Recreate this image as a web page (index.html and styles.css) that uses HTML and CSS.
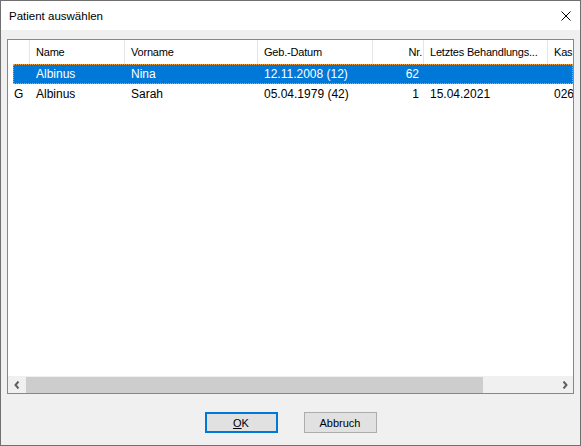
FILE: index.html
```html
<!DOCTYPE html>
<html lang="de">
<head>
<meta charset="utf-8">
<title>Patient auswählen</title>
<link rel="stylesheet" href="styles.css">
</head>
<body>
<div class="window">
  <div class="titlebar">
    <span class="title">Patient auswählen</span>
    <svg class="close" width="10" height="10" viewBox="0 0 10 10"><path d="M0.5 0.5 L9.5 9.5 M9.5 0.5 L0.5 9.5" stroke="#000" stroke-width="1" fill="none"/></svg>
  </div>
  <div class="client">
    <div class="listview">
      <div class="header">
        <div class="hcell"></div>
        <div class="hcell">Name</div>
        <div class="hcell">Vorname</div>
        <div class="hcell">Geb.-Datum</div>
        <div class="hcell right">Nr.</div>
        <div class="hcell">Letztes Behandlungs...</div>
        <div class="hcell">Kas</div>
      </div>
      <div class="rows">
        <div class="row selected">
          <div class="cell"></div>
          <div class="cell">Albinus</div>
          <div class="cell">Nina</div>
          <div class="cell">12.11.2008 (12)</div>
          <div class="cell right">62</div>
          <div class="cell"></div>
          <div class="cell"></div>
        </div>
        <div class="row">
          <div class="cell">G</div>
          <div class="cell">Albinus</div>
          <div class="cell">Sarah</div>
          <div class="cell">05.04.1979 (42)</div>
          <div class="cell right">1</div>
          <div class="cell">15.04.2021</div>
          <div class="cell">026</div>
        </div>
      </div>
      <div class="hscroll">
        <div class="sbtn"><svg width="6" height="8" viewBox="0 0 6 8"><path d="M4.5 0.5 L1.5 4 L4.5 7.5" stroke="#606060" stroke-width="2" fill="none"/></svg></div>
        <div class="track"><div class="thumb"></div></div>
        <div class="sbtn"><svg width="6" height="8" viewBox="0 0 6 8"><path d="M1.5 0.5 L4.5 4 L1.5 7.5" stroke="#606060" stroke-width="2" fill="none"/></svg></div>
      </div>
    </div>
    <div class="buttons">
      <button class="btn default"><u>O</u>K</button>
      <button class="btn">Abbruch</button>
    </div>
  </div>
</div>
</body>
</html>
```
FILE: styles.css
```css
html, body {
  margin: 0;
  padding: 0;
  background: #ffffff;
}
body {
  font-family: "Liberation Sans", Arial, sans-serif;
  color: #000;
}
.window {
  width: 581px;
  height: 446px;
  box-sizing: border-box;
  border: 1px solid #707070;
  background: #f0f0f0;
  display: flex;
  flex-direction: column;
}
.titlebar {
  height: 29px;
  flex: none;
  background: #ffffff;
  display: flex;
  align-items: center;
  justify-content: space-between;
  padding-left: 8px;
}
.title {
  font-size: 11.5px;
  color: #000;
}
.close {
  margin-right: 9px;
  display: block;
}
.client {
  flex: 1;
  display: flex;
  flex-direction: column;
  padding: 9px 6px 0 6px;
}
.listview {
  height: 355px;
  box-sizing: border-box;
  border: 1px solid #828790;
  background: #ffffff;
  display: flex;
  flex-direction: column;
  overflow: hidden;
}
.header, .row {
  display: grid;
  grid-template-columns: 22px 95px 133px 115px 51px 124px 100px;
  overflow: hidden;
}
.header {
  height: 24px;
  flex: none;
}
.hcell {
  box-sizing: border-box;
  border-right: 1px solid #e5e5e5;
  padding: 1px 6px 0 6px;
  line-height: 23px;
  font-size: 11px;
  letter-spacing: -0.2px;
  white-space: nowrap;
  overflow: hidden;
}
.hcell.right {
  text-align: right;
  padding-right: 1px;
}
.rows {
  flex: 1;
}
.row {
  height: 20px;
  position: relative;
}
.cell {
  padding: 0 6px;
  line-height: 20px;
  font-size: 12px;
  white-space: nowrap;
  overflow: hidden;
}
.cell.right {
  text-align: right;
  padding-right: 5px;
}
.row.selected {
  background: linear-gradient(to right, transparent 5px, #0078d7 5px);
  color: #ffffff;
}
.row.selected::after {
  content: "";
  position: absolute;
  left: 5px;
  top: 0;
  right: 0;
  bottom: 0;
  border: 1px dotted #f0a040;
  pointer-events: none;
}
.hscroll {
  height: 17px;
  flex: none;
  display: flex;
  background: #f0f0f0;
}
.sbtn {
  width: 17px;
  flex: none;
  display: flex;
  align-items: center;
  justify-content: center;
}
.sbtn svg {
  display: block;
}
.track {
  flex: 1;
  display: flex;
}
.thumb {
  width: 457px;
  margin: 1px 0 0 1px;
  background: #cdcdcd;
}
.buttons {
  display: flex;
  justify-content: center;
  gap: 26px;
  margin-top: 18px;
}
.btn {
  width: 73px;
  height: 21px;
  box-sizing: border-box;
  border: 1px solid #adadad;
  background: #e1e1e1;
  font-family: "Liberation Sans", Arial, sans-serif;
  font-size: 11px;
  color: #000;
  padding: 0;
  margin: 0;
}
.btn.default {
  border: 2px solid #0078d7;
}
```
